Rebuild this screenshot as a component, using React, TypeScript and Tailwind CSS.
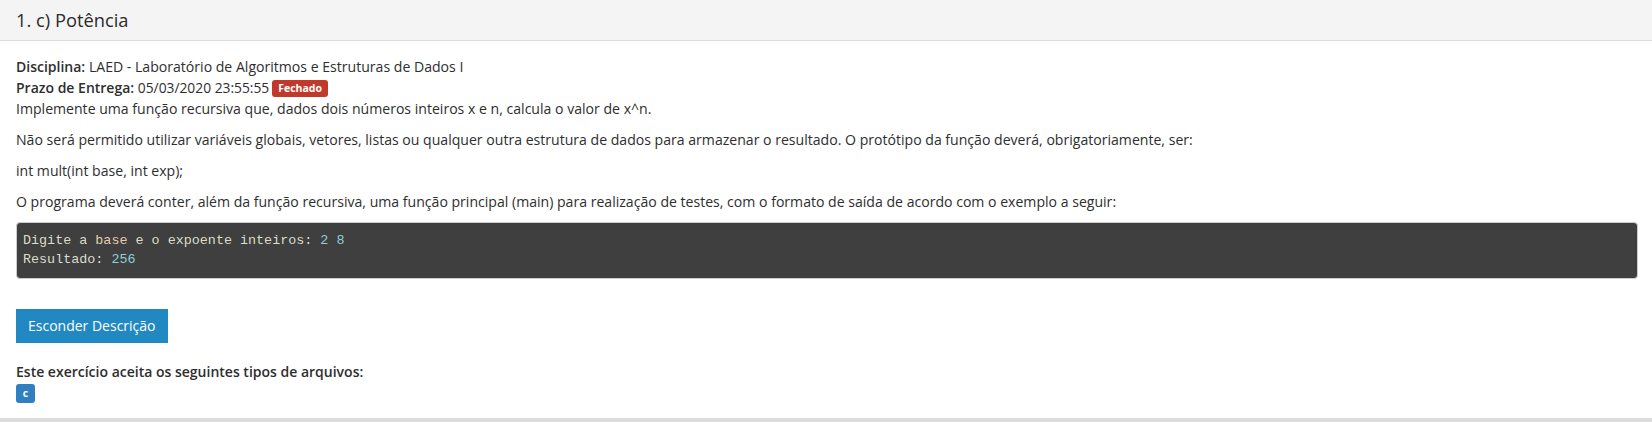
import React from "react";

export default function App() {
  return (
    <div className="w-[1652px] bg-white text-[#2e2e2e] text-[14.08px] leading-[21px]" style={{ fontFamily: '"Open Sans", "Noto Sans", sans-serif' }}>
      <div className="h-[41px] bg-[#f4f4f4] border-b border-[#dddddd] px-4 flex items-center">
        <h3 className="text-[18.3px] leading-[20px] text-[#2b2b2b] m-0">1. c) Potência</h3>
      </div>
      <div className="pt-[15px] pl-4 pr-[14px] pb-[15px] border-b-4 border-[#dcdcdc]">
        <div>
          <b className="font-semibold text-[14px]">Disciplina:</b> LAED - Laboratório de Algoritmos e Estruturas de Dados I
        </div>
        <div>
          <b className="font-semibold text-[14px]">Prazo de Entrega:</b> <span className="text-[13.8px]">05/03/2020 23:55:55</span>
          <span className="ml-[3px] inline-block align-[1px] bg-[#c0392b] text-white font-bold text-[10.5px] leading-[13px] px-[6px] pt-[2px] pb-[2px] rounded-[3px]">Fechado</span>
        </div>
        <p className="mb-[10px]">Implemente uma função recursiva que, dados dois números inteiros x e n, calcula o valor de x^n.</p>
        <p className="mb-[10px]">Não será permitido utilizar variáveis globais, vetores, listas ou qualquer outra estrutura de dados para armazenar o resultado. O protótipo da função deverá, obrigatoriamente, ser:</p>
        <p className="mb-[10px]">int mult(int base, int exp);</p>
        <p className="mb-[10px]">O programa deverá conter, além da função recursiva, uma função principal (main) para realização de testes, com o formato de saída de acordo com o exemplo a seguir:</p>
        <pre
          className="bg-[#3f3f3f] border border-[#cccccc] rounded-[4px] pl-[6px] pr-[9px] pt-[8px] pb-[9px] mb-[10px] text-[#dcdccc] text-[13.4px] leading-[19px]"
          style={{ fontFamily: '"Liberation Mono", "DejaVu Sans Mono", monospace' }}
        >
          <div>
            Digite a <span className="text-[#e3ceab]">base</span> e o expoente inteiros: <span className="text-[#8cd0d3]">2</span> <span className="text-[#8cd0d3]">8</span>
          </div>
          <div>
            Resultado: <span className="text-[#8cd0d3]">256</span>
          </div>
        </pre>
        <button className="mt-[20px] h-[34px] px-[12px] bg-[#2188c2] text-white text-[14px] leading-[20px]">Esconder Descrição</button>
        <div className="mt-[18px] font-semibold text-[14px]">Este exercício aceita os seguintes tipos de arquivos:</div>
        <div className="mt-[2px] flex">
          <span className="w-[19px] h-[19px] rounded-[3px] bg-[#2f7fc1] text-white font-bold text-[10.5px] flex items-center justify-center">c</span>
        </div>
      </div>
    </div>
  );
}
